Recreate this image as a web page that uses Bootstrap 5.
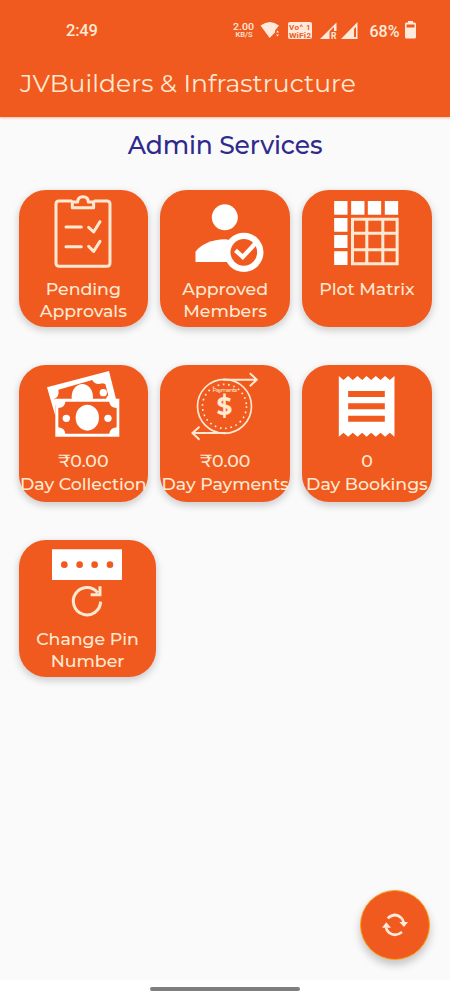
<!DOCTYPE html>
<html lang="en">
<head>
<meta charset="utf-8">
<meta name="viewport" content="width=device-width, initial-scale=1">
<title>Admin Services</title>
<link href="https://cdn.jsdelivr.net/npm/bootstrap@5.3.0/dist/css/bootstrap.min.css" rel="stylesheet">
<style>
  :root { --brand: #f15a1f; --cream: #ffe9d2; }
  body { font-family: Montserrat, Inter, sans-serif; background: #fafafb; height: 1000px; overflow: hidden; }
  .topbar { background: var(--brand); height: 117px; color: var(--cream); box-shadow: 0 1px 2px #f15a1f66; }
  .statusbar { height: 60px; font-family: Roboto, sans-serif; font-weight: 500; padding: 0 34px 0 66px; }
  .clock { font-size: 16.5px; line-height: 62px; letter-spacing: -.2px; }
  .status-icons { width: 184px; height: 60px; }
  .app-title { font-size: 25px; line-height: 46px; font-weight: 400; padding-left: 20px; letter-spacing: .05px; white-space: nowrap; }
  .page-title { color: #302a8c; font-size: 25px; line-height: 56px; height: 73px; font-weight: 500; letter-spacing: -.15px; }
  .tiles { display: grid; grid-template-columns: repeat(3, 129.3px); column-gap: 12.5px; row-gap: 38px; padding-left: 18.7px; }
  .tile { background: var(--brand); color: var(--cream); height: 137px; border-radius: 27px; box-shadow: 0 3px 7px 1px #0000002b; font-size: 17.4px; font-weight: 500; line-height: 21.7px; letter-spacing: -.05px; white-space: nowrap; }
  .tile svg { width: 129.3px; height: 88px; flex: none; }
  .tile-wide { width: 137.7px; }
  .counted svg { height: 84px; }
  .counted { line-height: 23px; }
  .refresh { width: 70px; height: 70px; left: 360px; top: 890px; background: var(--brand); border: 1px solid #f8a51d; box-shadow: 0 5px 8px #00000038; z-index: 2; }
  .homebar { height: 20px; background: #fff; }
  .homebar div { width: 150px; height: 4px; background: #807f80; border-radius: 2px; margin-bottom: 2px; }
</style>
</head>
<body class="d-flex flex-column">
<header class="topbar">
  <div class="statusbar d-flex justify-content-between">
    <span class="clock">2:49</span>
    <svg class="status-icons" viewBox="232 0 184 60" fill="#ffeadb" font-family="Roboto, sans-serif" font-weight="500">
      <text x="233" y="30" font-size="9.5" textLength="21" lengthAdjust="spacingAndGlyphs">2.00</text>
      <text x="235.500" y="37" font-size="7" textLength="17" lengthAdjust="spacingAndGlyphs">KB/S</text>
      <path d="M260.500 25.500Q270 18.500 279 25.500L275 30.500V32.500L269.700 38Z"/>
      <path d="M276 32.500l1.500-2 1.500 2zM276 34.500h3l-1.500 2z"/>
      <rect x="288" y="22" width="24" height="17" rx="2"/>
      <g fill="#f15a1f" font-size="8" font-weight="700">
        <text x="289" y="29.500" textLength="14">Vo^</text><text x="306" y="29.500">1</text>
        <text x="289" y="37.500" textLength="17" lengthAdjust="spacingAndGlyphs">WiFi</text><text x="306.500" y="37.500">2</text>
      </g>
      <path d="M320 39L336.500 22.500V31H334V27L329.500 31.500V39Z"/>
      <text x="331" y="39" font-size="8.500" font-weight="700">R</text>
      <path fill-rule="evenodd" d="M341 39L357.500 22V39ZM354 29v8h2v-10z"/>
      <text x="369.500" y="36.500" font-size="16" textLength="30">68%</text>
      <path fill-rule="evenodd" d="M408 21h5v1.500h1.500q1.500 0 1.500 1.500v13q0 1.500-1.500 1.500h-8q-1.500 0-1.500-1.500V24q0-1.500 1.500-1.500H408ZM406.500 24.500v3h8v-3z"/>
    </svg>
  </div>
  <div class="app-title">JVBuilders &amp; Infrastructure</div>
</header>

<main class="flex-grow-1">
  <h1 class="page-title text-center m-0">Admin Services</h1>
  <div class="tiles">
    <div class="tile d-flex flex-column align-items-center">
      <svg viewBox="57 30 388 264" fill="none" stroke="#ffe9d2" stroke-width="9" stroke-linecap="round" stroke-linejoin="round">
        <path d="M214 63h-37q-9 0-9 9v177q0 10 10 10h142q10 0 10-10V72q0-9-9-9h-37M217 66v17h64V66h-16q0-16-16-16t-16 16z"/>
        <path d="M198 141h46M198 200h46M266 142l15 14 19-31M266 199l15 15 19-30"/>
      </svg>
      <span>Pending</span><span>Approvals</span>
    </div>
    <div class="tile d-flex flex-column align-items-center">
      <svg viewBox="31.500 30 388 264" fill="#fff">
        <circle cx="226" cy="112" r="39"/>
        <path d="M138 246v-31Q165 180 228 178l25 4-18 64z"/>
        <circle cx="283" cy="217" r="59"/><circle cx="283" cy="217" r="40" fill="#f15a1f"/>
        <path d="M258 211l22 20 36-39" fill="none" stroke="#fff" stroke-width="13"/>
      </svg>
      <span>Approved</span><span>Members</span>
    </div>
    <div class="tile d-flex flex-column align-items-center">
      <svg viewBox="21.500 30 388 264" fill="#fff">
        <path d="M118 63h40v41h-40zM169 63h40v41h-40zM219 63h40v41h-40zM270 63h40v41h-40zM118 114h40v41h-40zM118 165h40v39h-40zM118 214h40v41h-40z"/>
        <path fill="none" stroke="#ffe9d2" stroke-width="9" d="M173 118h134v133H173zM216 118v133M264 118v133M173 160h134M173 209h134"/>
      </svg>
      <span>Plot Matrix</span>
    </div>

    <div class="tile counted d-flex flex-column align-items-center">
      <svg viewBox="57 30 388 252" fill="#fff">
        <path d="M141 97L327 48L348 131V150H166V182Z"/>
        <path fill="#f15a1f" d="M161 133q19-9 14-29L277 75q8 16 30 10l9 2 9 34q-6 4-7 12z"/>
        <ellipse cx="247" cy="126" rx="32" ry="39"/><circle cx="310" cy="113" r="11"/>
        <path d="M166 131h192v114H166z"/>
        <path fill="#f15a1f" d="M196 140h132q1 18 22 19v58q-21 3-22 19H196q-1-16-21-19v-58q20-1 21-19z"/>
        <ellipse cx="262" cy="188" rx="35" ry="39"/>
        <circle cx="199" cy="190" r="11"/><circle cx="324" cy="190" r="11"/>
      </svg>
      <span>₹0.00</span><span>Day Collection</span>
    </div>
    <div class="tile counted d-flex flex-column align-items-center">
      <svg viewBox="31.500 30 388 252" fill="none" stroke="#ffe9d2" stroke-width="5">
        <circle cx="225" cy="154" r="81"/>
        <circle cx="225" cy="154" r="66" stroke-dasharray="5 11"/>
        <path d="M221 74h100M301 55l21 19-21 20M229 234H129M150 215l-21 19 21 20" stroke-width="6"/>
        <path stroke="#f15a1f" stroke-width="15" d="M190 105h72"/>
        <g stroke="none" fill="#ffe9d2" text-anchor="middle">
          <text x="226" y="111" font-size="17" textLength="74">Payments</text>
          <text x="225" y="181" font-size="74" font-weight="700">$</text>
        </g>
      </svg>
      <span>₹0.00</span><span>Day Payments</span>
    </div>
    <div class="tile counted d-flex flex-column align-items-center">
      <svg viewBox="21.500 30 388 252" fill="#fff">
        <path d="M132 63l14 12 14-12 14 12 14-12 14 12 13-12 14 12 14-12 14 12 14-12 14 12 14-12V245l-14-12-14 12-14-12-14 12-14-12-14 12-13-12-14 12-14-12-14 12-14-12-14 12z"/>
        <path fill="#f15a1f" d="M160 108h110v18H160zM160 145h110v18H160zM160 182h110v18H160z"/>
      </svg>
      <span>0</span><span>Day Bookings</span>
    </div>

    <div class="tile tile-wide d-flex flex-column align-items-center">
      <svg viewBox="69 30 388 264" fill="#fff">
        <path d="M156 58h210v92H156z"/>
        <g fill="#f15a1f"><circle cx="193" cy="104" r="10"/><circle cx="239" cy="104" r="10"/><circle cx="284" cy="104" r="10"/><circle cx="330" cy="104" r="10"/></g>
        <path d="M293 188a41 41 0 1 0 9 27M300 169v25H272" fill="none" stroke="#ffe9d2" stroke-width="9"/>
      </svg>
      <span>Change Pin</span><span>Number</span>
    </div>
  </div>
</main>

<button class="refresh btn rounded-circle position-absolute p-0 d-flex align-items-center justify-content-center" aria-label="Refresh">
  <svg width="26" height="24" viewBox="126 114 78 72" fill="none" stroke="#ffeadb" stroke-width="8">
    <path d="M143 130Q165 111 183 128Q190 135 191 142M186 171Q166 187 147 173Q139 165 138 157"/>
    <path fill="#ffeadb" stroke="none" d="M178 141h26l-12 15zM126 158h27l-14-16z"/>
  </svg>
</button>
<footer class="homebar d-flex justify-content-center align-items-center"><div></div></footer>
<script src="https://cdn.jsdelivr.net/npm/bootstrap@5.3.0/dist/js/bootstrap.bundle.min.js"></script>
</body>
</html>
